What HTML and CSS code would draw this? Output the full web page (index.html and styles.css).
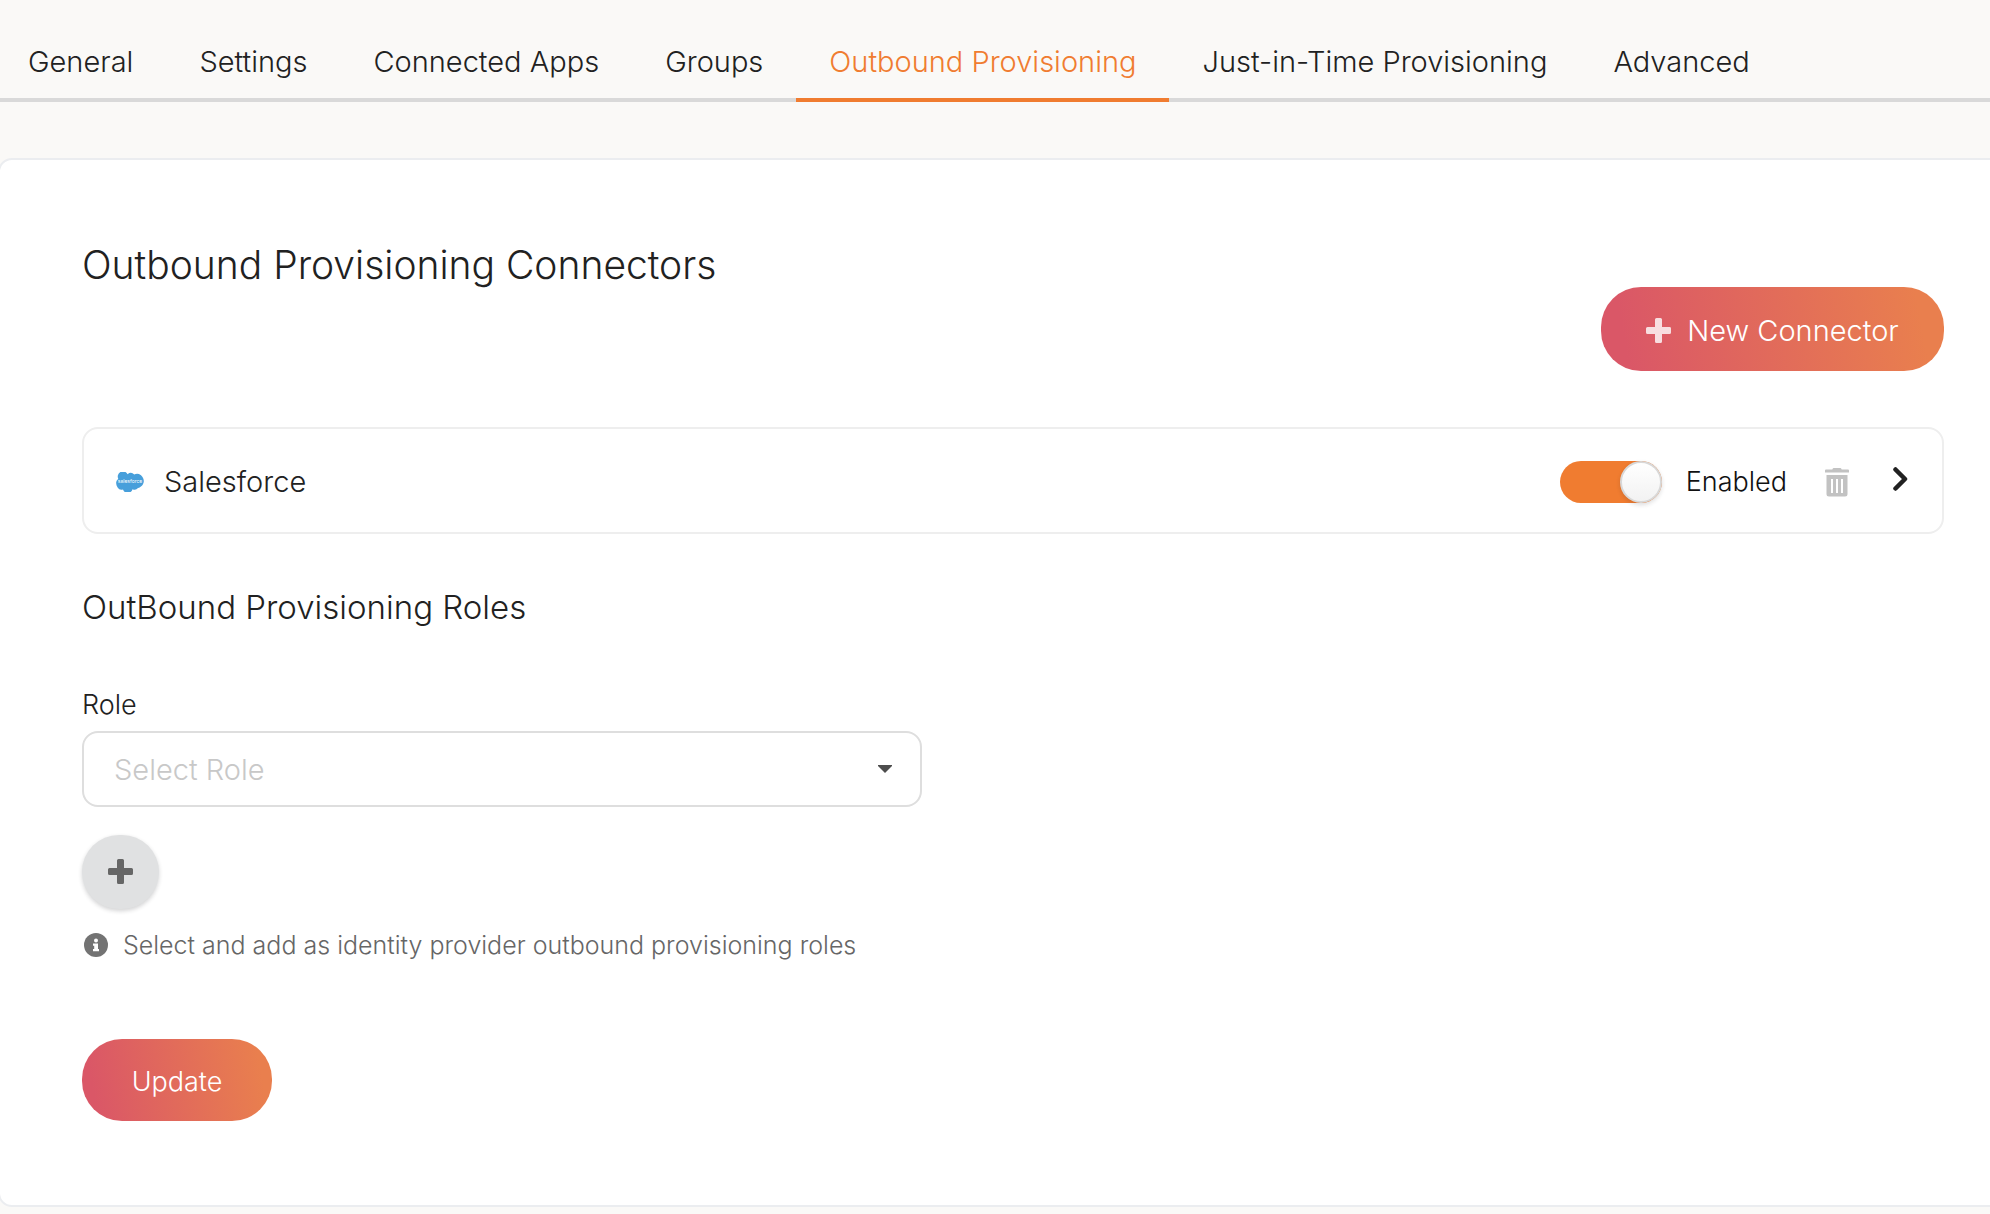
FILE: index.html
```html
<!DOCTYPE html>
<html lang="en">
<head>
<meta charset="utf-8">
<meta name="viewport" content="width=device-width, initial-scale=1">
<title>Outbound Provisioning</title>
<link rel="stylesheet" href="styles.css">
</head>
<body>
<nav class="tabs" aria-label="Identity provider sections">
  <a class="tab" href="#general">General</a>
  <a class="tab" href="#settings">Settings</a>
  <a class="tab" href="#apps">Connected Apps</a>
  <a class="tab" href="#groups">Groups</a>
  <a class="tab tab-active" href="#outbound" aria-current="page">Outbound Provisioning</a>
  <a class="tab" href="#jit">Just-in-Time Provisioning</a>
  <a class="tab" href="#advanced">Advanced</a>
</nav>

<main class="panel">
  <header class="panel-head">
    <h1 class="title">Outbound Provisioning Connectors</h1>
    <button class="button button-large" type="button">
      <svg class="plus" viewBox="0 0 25 25" aria-hidden="true"><path d="M10.500 0h4a1.500 1.500 0 0 1 1.500 1.500V9h7.500A1.500 1.500 0 0 1 25 10.500v4a1.500 1.500 0 0 1-1.500 1.500H16v7.500a1.500 1.500 0 0 1-1.500 1.500h-4A1.500 1.500 0 0 1 9 23.500V16H1.500A1.500 1.500 0 0 1 0 14.500v-4A1.500 1.500 0 0 1 1.500 9H9V1.500A1.500 1.500 0 0 1 10.500 0z"/></svg>
      New Connector
    </button>
  </header>

  <section class="connector">
    <svg class="cloud" viewBox="0 0 28 20" aria-hidden="true">
      <path fill="#479fdb" d="M11.600 2.200A5 5 0 0 1 18.300 2.500 6.100 6.100 0 0 1 26.500 5.100C29.700 9.500 26.600 14.700 22 16.100A4.400 4.400 0 0 1 16.500 17.200 5 5 0 0 1 7 17.500 4.600 4.600 0 0 1 1.600 15.500C-.6 12.300-.3 8.400 2.300 6.900A5.100 5.100 0 0 1 11.600 2.200z"/>
      <text class="cloud-text" x="14" y="11" text-anchor="middle">salesforce</text>
    </svg>
    <span class="connector-name">Salesforce</span>
    <label class="toggle">
      <input class="switch" type="checkbox" checked>
      Enabled
    </label>
    <button class="icon-button trash" type="button" aria-label="Delete connector">
      <svg viewBox="0 0 24 29" width="24" height="29" aria-hidden="true"><path fill="#c2c2c2" fill-rule="evenodd" d="M8.500 0h7q.8 0 1.200 1.500H23q1 0 1 1v2H0v-2q0-1 1-1h6.300Q7.700 0 8.500 0zM1.500 7h21v19q0 2.500-2.500 2.500H4Q1.500 28.500 1.500 26zM6 11v14h2V11zM11 11v14h2V11zM16 11v14h2V11z"/></svg>
    </button>
    <button class="icon-button open" type="button" aria-label="Open connector">
      <svg viewBox="0 0 15 24" width="15" height="24" aria-hidden="true"><path fill="none" stroke="#212121" stroke-width="4.500" stroke-linecap="round" stroke-linejoin="round" d="M2.500 2.500L12 12l-9.500 9.500"/></svg>
    </button>
  </section>

  <form class="roles">
    <h2 class="subtitle">OutBound Provisioning Roles</h2>
    <label class="field-label" for="role">Role</label>
    <div class="select">
      <select class="select-input" id="role"><option>Select Role</option></select>
      <svg class="caret" viewBox="0 0 14 8" aria-hidden="true"><path fill="#4d4d4d" d="M0 0h14v1L7 8 0 1z"/></svg>
    </div>
    <button class="add" type="button" aria-label="Add role">
      <svg class="plus" viewBox="0 0 25 25" aria-hidden="true"><path d="M10.500 0h4a1.500 1.500 0 0 1 1.500 1.500V9h7.500A1.500 1.500 0 0 1 25 10.500v4a1.500 1.500 0 0 1-1.500 1.500H16v7.500a1.500 1.500 0 0 1-1.500 1.500h-4A1.500 1.500 0 0 1 9 23.500V16H1.500A1.500 1.500 0 0 1 0 14.500v-4A1.500 1.500 0 0 1 1.500 9H9V1.500A1.500 1.500 0 0 1 10.500 0z"/></svg>
    </button>
    <p class="hint">
      <svg viewBox="0 0 24 24" width="24" height="24" aria-hidden="true"><circle cx="12" cy="12" r="12" fill="#737373"/><circle cx="12" cy="7.500" r="2" fill="#fff"/><path fill="#fff" d="M9 10.500h5V16h1v2.300H9V16h1.200v-3.200H9z"/></svg>
      Select and add as identity provider outbound provisioning roles
    </p>
    <button class="button" type="submit">Update</button>
  </form>
</main>
</body>
</html>
```
FILE: styles.css
```css
*,
*::before {
  box-sizing: border-box;
}

body {
  margin: 0;
  overflow-x: hidden;
  background: #faf9f7;
  color: #212121;
  font-family: Inter, "Open Sans", sans-serif;
  font-size: 29px;
  font-weight: 300;
}

button,
select {
  font: inherit;
}

.tabs {
  display: flex;
  height: 102px;
  margin-left: -5px;
  box-shadow: inset 0 -4px #d9d9d9;
}

.tab {
  padding: 44px 33px 0;
  color: inherit;
  line-height: 36px;
  text-decoration: none;
  white-space: nowrap;
}

.tab-active {
  border-bottom: 4px solid #f07c30;
  color: #f07c30;
}

.panel {
  margin: 56px -16px 8px -2px;
  padding: 84px 60px 84px 82px;
  border: 2px solid #ebedf0;
  border-radius: 14px;
  background: #fff;
}

.panel-head {
  display: flex;
  justify-content: space-between;
  align-items: flex-start;
  height: 127px;
}

.title {
  margin: 0;
  font-size: 39px;
  font-weight: 300;
  line-height: 42px;
}

.button {
  display: flex;
  align-items: center;
  justify-content: center;
  gap: 16px;
  min-width: 190px;
  height: 82px;
  padding: 2px 0 0;
  border: 0;
  border-radius: 40px;
  background: linear-gradient(80deg, #da5767 8%, #e97f4e 92%);
  color: #fff;
  font-size: 27px;
}

.button-large {
  min-width: 343px;
  height: 84px;
  margin-top: 43px;
  font-size: 29px;
}

.plus {
  width: 25px;
  height: 25px;
  fill: currentColor;
}

.button .plus {
  opacity: 0.8;
}

.connector {
  display: flex;
  align-items: center;
  height: 107px;
  margin-top: 56px;
  padding: 2px 34px 0 32px;
  border: 2px solid #eee;
  border-radius: 16px;
}

.cloud {
  width: 28px;
  height: 20px;
}

.cloud-text {
  fill: #fff;
  font-size: 5px;
  font-weight: 400;
}

.connector-name {
  margin-left: 20px;
}

.toggle {
  display: flex;
  align-items: center;
  gap: 24px;
  margin-left: auto;
  color: #111;
  font-size: 27px;
}

.switch {
  display: flex;
  justify-content: flex-end;
  width: 102px;
  height: 42px;
  margin: 0;
  border-radius: 21px;
  background: #f07c30;
  appearance: none;
}

.switch::before {
  width: 42px;
  height: 42px;
  border: 2px solid #d8d8d8;
  border-radius: 50%;
  background: linear-gradient(#fff, #f2f2f2);
  box-shadow: 0 2px 4px rgba(34, 36, 38, 0.15);
  content: "";
}

.icon-button {
  display: flex;
  padding: 0;
  border: 0;
  background: none;
}

.trash {
  margin: 2px 44px 0 38px;
}

.open {
  margin-bottom: 6px;
}

.subtitle {
  margin: 52px 0 0;
  font-size: 33px;
  font-weight: 300;
  line-height: 42px;
}

.field-label {
  display: block;
  margin-top: 61px;
  font-size: 27px;
  line-height: 32px;
}

.select {
  display: grid;
  align-items: center;
  max-width: 840px;
  margin-top: 10px;
}

.select-input,
.caret {
  grid-area: 1 / 1;
}

.select-input {
  width: 100%;
  height: 76px;
  padding: 0 30px;
  border: 2px solid #dedede;
  border-radius: 16px;
  background: #fff;
  color: #c8c8c8;
  appearance: none;
}

.caret {
  justify-self: end;
  width: 14px;
  height: 8px;
  margin-right: 30px;
  pointer-events: none;
}

.add {
  display: flex;
  align-items: center;
  justify-content: center;
  width: 77px;
  height: 74px;
  margin-top: 28px;
  padding: 0 0 2px;
  border: 0;
  border-radius: 38px;
  background: #e0e1e2;
  box-shadow: 0 2px 4px rgba(34, 36, 38, 0.2);
  color: #666;
}

.hint {
  display: flex;
  align-items: center;
  gap: 15px;
  margin: 20px 0 78px 2px;
  color: #666;
  font-size: 25px;
  line-height: 32px;
}
```
